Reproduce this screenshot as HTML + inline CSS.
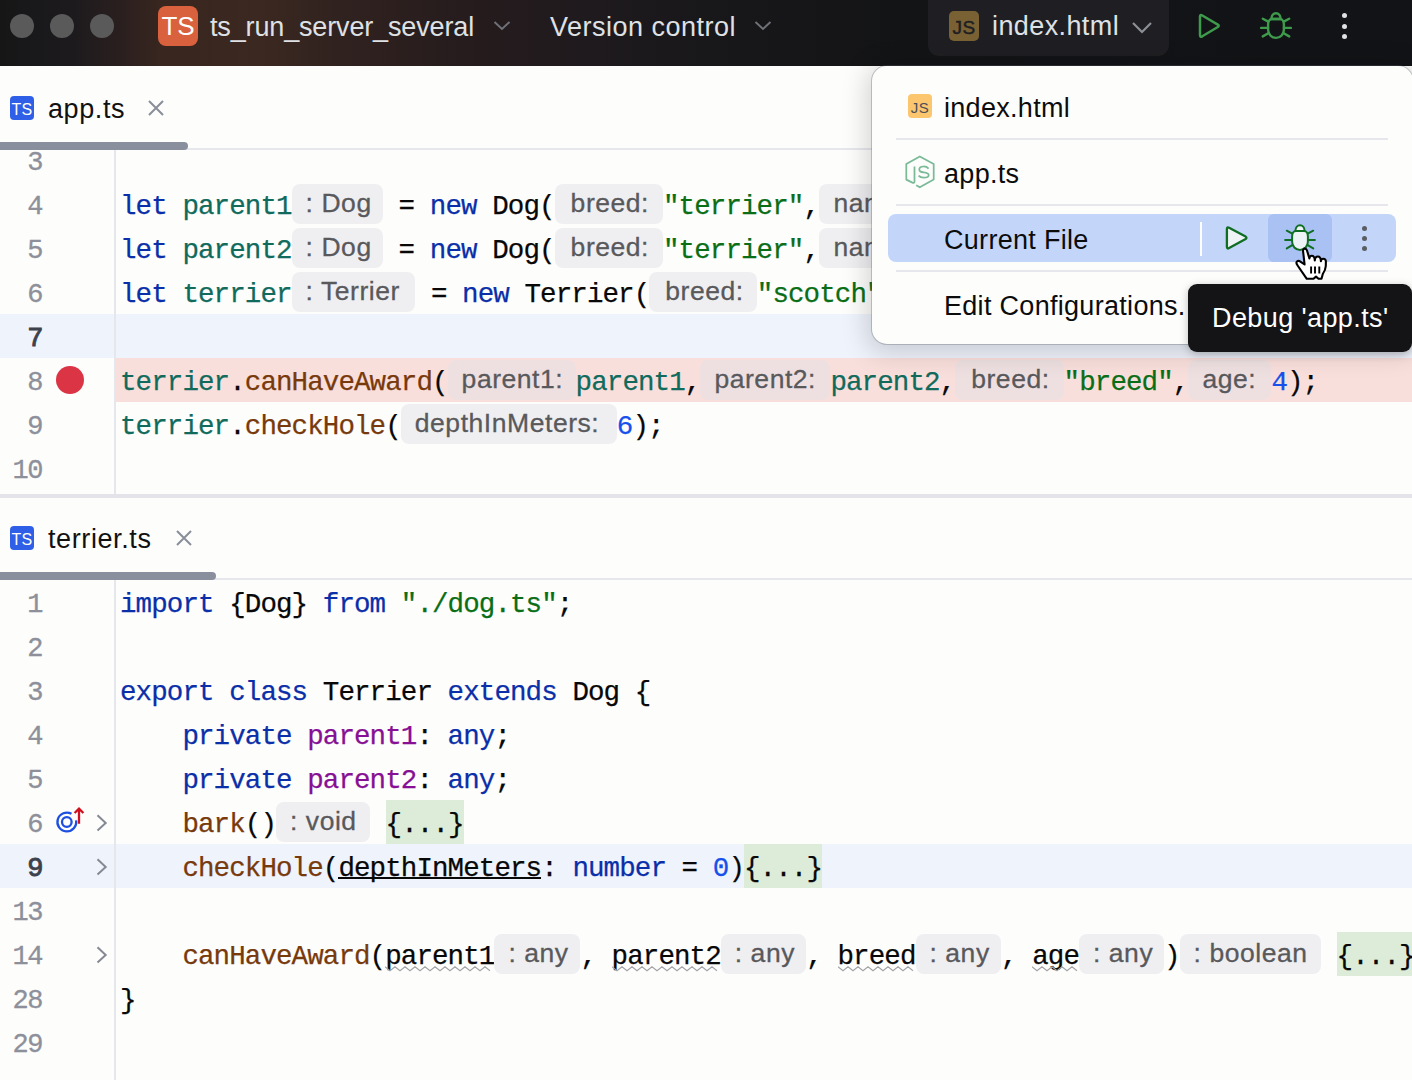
<!DOCTYPE html>
<html><head><meta charset="utf-8">
<style>
*{margin:0;padding:0;box-sizing:border-box}
html,body{width:1412px;height:1080px;overflow:hidden;background:#fdfdfc}
body{position:relative;font-family:"Liberation Sans",sans-serif}
.abs{position:absolute}
.cd{position:absolute;height:44px;line-height:44px;margin-top:3px;font-family:"Liberation Mono",monospace;font-size:27.5px;letter-spacing:-0.903px;white-space:pre;-webkit-text-stroke:0.25px currentColor}
.ul{text-decoration:underline;text-decoration-thickness:2px;text-underline-offset:5px}
.wv{text-decoration:underline wavy #a8a8ac;text-decoration-thickness:1.5px;text-underline-offset:6px}
.hb{position:absolute;height:39.5px;line-height:39px;border-radius:8px;background:#efeff2;color:#59595c;font-size:26.5px;letter-spacing:0.55px;-webkit-text-stroke:0.3px #59595c;white-space:pre;overflow:hidden}
.fold{position:absolute;height:44px;background:#dcecd8}
.ln{position:absolute;left:0;width:42px;text-align:right;height:44px;line-height:44px;margin-top:3px;font-family:"Liberation Mono",monospace;font-size:27px;letter-spacing:-1.5px;color:#8d909a;-webkit-text-stroke:0.3px currentColor}
.ln.cur{color:#3d414b;-webkit-text-stroke:0.9px currentColor}
.sep{position:absolute;background:#e6e7ed}
.tabtxt{position:absolute;font-size:27px;letter-spacing:0.6px;color:#111;line-height:34px;white-space:pre;margin-top:1px}
.popi{position:absolute;font-size:27px;letter-spacing:0.3px;color:#0c0c0c;white-space:pre;line-height:34px;margin-top:2px}
</style></head><body>

<!-- title bar -->
<div class="abs" style="left:0;top:0;width:1412px;height:66px;background:linear-gradient(90deg,#161617 0px,#1c1a1d 70px,#2a1f1f 120px,#38261f 160px,#3b2820 260px,#30221f 340px,#251b1d 480px,#1e1a1e 600px,#18171a 706px,#131416 900px,#121316 1412px)"></div>
<div class="abs" style="left:10px;top:14px;width:24px;height:24px;border-radius:50%;background:#5a5a5a"></div>
<div class="abs" style="left:50px;top:14px;width:24px;height:24px;border-radius:50%;background:#5a5a5a"></div>
<div class="abs" style="left:90px;top:14px;width:24px;height:24px;border-radius:50%;background:#5a5a5a"></div>
<div class="abs" style="left:158px;top:6px;width:40px;height:40px;border-radius:8px;background:#d9613d;color:#fff;font-size:26px;line-height:40px;text-align:center">TS</div>
<div class="abs" style="left:210px;top:10px;font-size:27px;letter-spacing:-0.15px;line-height:34px;color:#dfe1e5;white-space:pre">ts_run_server_several</div>
<svg class="abs" style="left:493px;top:19px" width="18" height="14" viewBox="0 0 18 14"><path d="M1.5 3 L9 10 L16.5 3" fill="none" stroke="#6f7278" stroke-width="1.9"/></svg>
<div class="abs" style="left:550px;top:10px;font-size:27px;letter-spacing:0.5px;line-height:34px;color:#dfe1e5;white-space:pre">Version control</div>
<svg class="abs" style="left:754px;top:19px" width="18" height="14" viewBox="0 0 18 14"><path d="M1.5 3 L9 10 L16.5 3" fill="none" stroke="#6f7278" stroke-width="1.9"/></svg>
<div class="abs" style="left:928px;top:-12px;width:241px;height:68px;border-radius:11px;background:#1f1f23"></div>
<div class="abs" style="left:949px;top:11px;width:30px;height:30px;border-radius:5px;background:#7a6133;color:#1e1f22;font-size:19px;line-height:33px;text-align:center;letter-spacing:0.5px;-webkit-text-stroke:0.5px #1e1f22">JS</div>
<div class="abs" style="left:992px;top:9px;font-size:27px;letter-spacing:0.4px;line-height:34px;color:#dfe1e5;white-space:pre">index.html</div>
<svg class="abs" style="left:1131px;top:20px" width="22" height="15" viewBox="0 0 22 15"><path d="M2 3 L11 12 L20 3" fill="none" stroke="#8c8f96" stroke-width="2.2"/></svg>
<svg class="abs" style="left:1194px;top:11px" width="30" height="30" viewBox="0 0 30 30"><path d="M6 5.8 Q6 3.2 8.3 4.5 L23.8 13.6 Q25.6 14.8 23.8 16 L8.3 25.3 Q6 26.6 6 24 Z" fill="none" stroke="#3f9b4c" stroke-width="2.5" stroke-linejoin="round"/></svg>
<svg class="abs" style="left:1260px;top:10px" width="32" height="32" viewBox="0 0 32 32"><g fill="none" stroke="#3f9b4c" stroke-width="2.4" stroke-linecap="round" stroke-linejoin="round"><path d="M11.4 9 C11.4 5.5 13.4 3.2 16 3.2 C18.6 3.2 20.6 5.5 20.6 9 Z" fill="none"/><path d="M12 9 H20 C22.4 9 23.9 11.4 23.9 14.4 V19.5 C23.9 24.2 20.5 27.9 16 27.9 C11.5 27.9 8.1 24.2 8.1 19.5 V14.4 C8.1 11.4 9.6 9 12 9 Z" fill="none"/><path d="M1.1 17.9 H8.1 M23.9 17.9 H30.9 M2.8 8.7 L8.3 11.6 M29.2 8.7 L23.7 11.6 M2.8 26.4 L8.3 23.2 M29.2 26.4 L23.7 23.2"/></g></svg>
<div class="abs" style="left:1341.5px;top:12.7px;width:5px;height:5px;border-radius:50%;background:#dfe1e5"></div>
<div class="abs" style="left:1341.5px;top:23.5px;width:5px;height:5px;border-radius:50%;background:#dfe1e5"></div>
<div class="abs" style="left:1341.5px;top:34.2px;width:5px;height:5px;border-radius:50%;background:#dfe1e5"></div>

<!-- editor 1 -->
<div class="abs" style="left:0;top:314px;width:1412px;height:44px;background:#eff3fc"></div>
<div class="abs" style="left:116px;top:358px;width:1296px;height:44px;background:#f9dfdc"></div>
<div class="ln" style="top:138px">3</div><div class="ln" style="top:182px">4</div><div class="ln" style="top:226px">5</div><div class="ln" style="top:270px">6</div><div class="ln cur" style="top:314px">7</div><div class="ln" style="top:358px">8</div><div class="ln" style="top:402px">9</div><div class="ln" style="top:446px">10</div>
<div class="abs" style="left:56px;top:366px;width:28px;height:28px;border-radius:50%;background:#db3545"></div>
<div class="cd" style="left:120.00px;top:182px;color:#0a2fa8">let&nbsp;</div>
<div class="cd" style="left:182.40px;top:182px;color:#106b5d">parent1</div>
<div class="hb" style="left:291.60px;top:184px;width:91.4px"><span style="padding-left:14px">: Dog</span></div>
<div class="cd" style="left:383.00px;top:182px;color:#080808">&nbsp;=&nbsp;</div>
<div class="cd" style="left:429.80px;top:182px;color:#0a2fa8">new</div>
<div class="cd" style="left:476.60px;top:182px;color:#080808">&nbsp;Dog(</div>
<div class="hb" style="left:554.60px;top:184px;width:108.4px"><span style="padding-left:16px">breed:</span></div>
<div class="cd" style="left:663.00px;top:182px;color:#0a6e17">"terrier"</div>
<div class="cd" style="left:803.40px;top:182px;color:#080808">,</div>
<div class="hb" style="left:819.00px;top:184px;width:120px"><span style="padding-left:14.5px">name:</span></div><div class="cd" style="left:120.00px;top:226px;color:#0a2fa8">let&nbsp;</div>
<div class="cd" style="left:182.40px;top:226px;color:#106b5d">parent2</div>
<div class="hb" style="left:291.60px;top:228px;width:91.4px"><span style="padding-left:14px">: Dog</span></div>
<div class="cd" style="left:383.00px;top:226px;color:#080808">&nbsp;=&nbsp;</div>
<div class="cd" style="left:429.80px;top:226px;color:#0a2fa8">new</div>
<div class="cd" style="left:476.60px;top:226px;color:#080808">&nbsp;Dog(</div>
<div class="hb" style="left:554.60px;top:228px;width:108.4px"><span style="padding-left:16px">breed:</span></div>
<div class="cd" style="left:663.00px;top:226px;color:#0a6e17">"terrier"</div>
<div class="cd" style="left:803.40px;top:226px;color:#080808">,</div>
<div class="hb" style="left:819.00px;top:228px;width:120px"><span style="padding-left:14.5px">name:</span></div><div class="cd" style="left:120.00px;top:270px;color:#0a2fa8">let&nbsp;</div>
<div class="cd" style="left:182.40px;top:270px;color:#106b5d">terrier</div>
<div class="hb" style="left:291.60px;top:272px;width:123.7px"><span style="padding-left:14px">: Terrier</span></div>
<div class="cd" style="left:415.30px;top:270px;color:#080808">&nbsp;=&nbsp;</div>
<div class="cd" style="left:462.10px;top:270px;color:#0a2fa8">new</div>
<div class="cd" style="left:508.90px;top:270px;color:#080808">&nbsp;Terrier(</div>
<div class="hb" style="left:649.30px;top:272px;width:107.5px"><span style="padding-left:16px">breed:</span></div>
<div class="cd" style="left:756.80px;top:270px;color:#0a6e17">"scotch"</div>
<div class="cd" style="left:881.60px;top:270px;color:#080808">,&nbsp;</div><div class="cd" style="left:120.00px;top:358px;color:#106b5d">terrier</div>
<div class="cd" style="left:229.20px;top:358px;color:#080808">.</div>
<div class="cd" style="left:244.80px;top:358px;color:#783a0c">canHaveAward</div>
<div class="cd" style="left:432.00px;top:358px;color:#080808">(</div>
<div class="hb" style="left:447.60px;top:360px;width:128px;background:#eee0e1"><span style="padding-left:14px">parent1:</span></div>
<div class="cd" style="left:575.60px;top:358px;color:#106b5d">parent1</div>
<div class="cd" style="left:684.80px;top:358px;color:#080808">,</div>
<div class="hb" style="left:700.40px;top:360px;width:130px;background:#eee0e1"><span style="padding-left:14px">parent2:</span></div>
<div class="cd" style="left:830.40px;top:358px;color:#106b5d">parent2</div>
<div class="cd" style="left:939.60px;top:358px;color:#080808">,</div>
<div class="hb" style="left:955.20px;top:360px;width:108.4px;background:#eee0e1"><span style="padding-left:16px">breed:</span></div>
<div class="cd" style="left:1063.60px;top:358px;color:#0a6e17">"breed"</div>
<div class="cd" style="left:1172.80px;top:358px;color:#080808">,</div>
<div class="hb" style="left:1188.40px;top:360px;width:83px;background:#eee0e1"><span style="padding-left:14px">age:</span></div>
<div class="cd" style="left:1271.40px;top:358px;color:#1750eb">4</div>
<div class="cd" style="left:1287.00px;top:358px;color:#080808">);</div><div class="cd" style="left:120.00px;top:402px;color:#106b5d">terrier</div>
<div class="cd" style="left:229.20px;top:402px;color:#080808">.</div>
<div class="cd" style="left:244.80px;top:402px;color:#783a0c">checkHole</div>
<div class="cd" style="left:385.20px;top:402px;color:#080808">(</div>
<div class="hb" style="left:400.80px;top:404px;width:216px"><span style="padding-left:14px">depthInMeters:</span></div>
<div class="cd" style="left:616.80px;top:402px;color:#1750eb">6</div>
<div class="cd" style="left:632.40px;top:402px;color:#080808">);</div>
<div class="sep" style="left:114px;top:149px;width:2px;height:345px"></div>

<!-- tab header 1 -->
<div class="abs" style="left:0;top:66px;width:1412px;height:83px;background:#fdfdfc"></div>
<div class="abs" style="left:10px;top:96px;width:24px;height:24px;border-radius:4px;background:#2f5fe6;color:#fff;font-size:16px;line-height:27px;text-align:center;letter-spacing:0.3px">TS</div>
<div class="tabtxt" style="left:48px;top:91px">app.ts</div>
<svg class="abs" style="left:148px;top:100px" width="16" height="16" viewBox="0 0 16 16"><path d="M1 1 L15 15 M15 1 L1 15" stroke="#8a8e99" stroke-width="2"/></svg>
<div class="sep" style="left:0;top:148px;width:1412px;height:2px"></div>
<div class="abs" style="left:-8px;top:142px;width:196px;height:8px;border-radius:4px;background:#8a8f9e"></div>

<!-- split divider -->
<div class="abs" style="left:0;top:494px;width:1412px;height:4px;background:#e3e3e9"></div>

<!-- tab header 2 -->
<div class="abs" style="left:10px;top:526px;width:24px;height:24px;border-radius:4px;background:#2f5fe6;color:#fff;font-size:16px;line-height:27px;text-align:center;letter-spacing:0.3px">TS</div>
<div class="tabtxt" style="left:48px;top:521px">terrier.ts</div>
<svg class="abs" style="left:176px;top:530px" width="16" height="16" viewBox="0 0 16 16"><path d="M1 1 L15 15 M15 1 L1 15" stroke="#8a8e99" stroke-width="2"/></svg>
<div class="sep" style="left:0;top:578px;width:1412px;height:2px"></div>
<div class="abs" style="left:-8px;top:572px;width:224px;height:8px;border-radius:4px;background:#8a8f9e"></div>

<!-- editor 2 -->
<div class="abs" style="left:0;top:844px;width:1412px;height:44px;background:#eff3fc"></div>
<div class="ln" style="top:580px">1</div><div class="ln" style="top:624px">2</div><div class="ln" style="top:668px">3</div><div class="ln" style="top:712px">4</div><div class="ln" style="top:756px">5</div><div class="ln" style="top:800px">6</div><div class="ln cur" style="top:844px">9</div><div class="ln" style="top:888px">13</div><div class="ln" style="top:932px">14</div><div class="ln" style="top:976px">28</div><div class="ln" style="top:1020px">29</div>
<div class="cd" style="left:120.00px;top:580px;color:#0a2fa8">import</div>
<div class="cd" style="left:213.60px;top:580px;color:#080808">&nbsp;{Dog}&nbsp;</div>
<div class="cd" style="left:322.80px;top:580px;color:#0a2fa8">from</div>
<div class="cd" style="left:385.20px;top:580px;color:#080808">&nbsp;</div>
<div class="cd" style="left:400.80px;top:580px;color:#0a6e17">"./dog.ts"</div>
<div class="cd" style="left:556.80px;top:580px;color:#080808">;</div><div class="cd" style="left:120.00px;top:668px;color:#0a2fa8">export&nbsp;class</div>
<div class="cd" style="left:307.20px;top:668px;color:#080808">&nbsp;Terrier&nbsp;</div>
<div class="cd" style="left:447.60px;top:668px;color:#0a2fa8">extends</div>
<div class="cd" style="left:556.80px;top:668px;color:#080808">&nbsp;Dog&nbsp;{</div><div class="cd" style="left:120.00px;top:712px;color:#080808">&nbsp;&nbsp;&nbsp;&nbsp;</div>
<div class="cd" style="left:182.40px;top:712px;color:#0a2fa8">private&nbsp;</div>
<div class="cd" style="left:307.20px;top:712px;color:#871094">parent1</div>
<div class="cd" style="left:416.40px;top:712px;color:#080808">:&nbsp;</div>
<div class="cd" style="left:447.60px;top:712px;color:#0a2fa8">any</div>
<div class="cd" style="left:494.40px;top:712px;color:#080808">;</div><div class="cd" style="left:120.00px;top:756px;color:#080808">&nbsp;&nbsp;&nbsp;&nbsp;</div>
<div class="cd" style="left:182.40px;top:756px;color:#0a2fa8">private&nbsp;</div>
<div class="cd" style="left:307.20px;top:756px;color:#871094">parent2</div>
<div class="cd" style="left:416.40px;top:756px;color:#080808">:&nbsp;</div>
<div class="cd" style="left:447.60px;top:756px;color:#0a2fa8">any</div>
<div class="cd" style="left:494.40px;top:756px;color:#080808">;</div><div class="cd" style="left:120.00px;top:800px;color:#080808">&nbsp;&nbsp;&nbsp;&nbsp;</div>
<div class="cd" style="left:182.40px;top:800px;color:#783a0c">bark</div>
<div class="cd" style="left:244.80px;top:800px;color:#080808">()</div>
<div class="hb" style="left:276.00px;top:802px;width:94px"><span style="padding-left:14px">: void</span></div>
<div class="cd" style="left:370.00px;top:800px;color:#080808">&nbsp;</div>
<div class="fold" style="left:385.60px;top:800px;width:78.00px"></div>
<div class="cd" style="left:385.60px;top:800px;color:#080808">{...}</div><div class="cd" style="left:120.00px;top:844px;color:#080808">&nbsp;&nbsp;&nbsp;&nbsp;</div>
<div class="cd" style="left:182.40px;top:844px;color:#783a0c">checkHole</div>
<div class="cd" style="left:322.80px;top:844px;color:#080808">(</div>
<div class="cd" style="left:338.40px;top:844px;color:#080808">depthInMeters</div>
<div class="abs" style="left:338.40px;top:877px;width:202.80px;height:2px;background:#080808"></div>
<div class="cd" style="left:541.20px;top:844px;color:#080808">:&nbsp;</div>
<div class="cd" style="left:572.40px;top:844px;color:#0a2fa8">number</div>
<div class="cd" style="left:666.00px;top:844px;color:#080808">&nbsp;=&nbsp;</div>
<div class="cd" style="left:712.80px;top:844px;color:#1750eb">0</div>
<div class="cd" style="left:728.40px;top:844px;color:#080808">)</div>
<div class="fold" style="left:744.00px;top:844px;width:78.00px"></div>
<div class="cd" style="left:744.00px;top:844px;color:#080808">{...}</div><div class="cd" style="left:120.00px;top:932px;color:#080808">&nbsp;&nbsp;&nbsp;&nbsp;</div>
<div class="cd" style="left:182.40px;top:932px;color:#783a0c">canHaveAward</div>
<div class="cd" style="left:369.60px;top:932px;color:#080808">(</div>
<div class="cd" style="left:385.20px;top:932px;color:#080808">parent1</div>
<svg class="abs" style="left:385.20px;top:966px" width="109.2" height="6" viewBox="0 0 109.2 6"><polyline points="0.0,0.8 5.0,4.8 10.0,0.8 15.0,4.8 20.0,0.8 25.0,4.8 30.0,0.8 35.0,4.8 40.0,0.8 45.0,4.8 50.0,0.8 55.0,4.8 60.0,0.8 65.0,4.8 70.0,0.8 75.0,4.8 80.0,0.8 85.0,4.8 90.0,0.8 95.0,4.8 100.0,0.8 105.0,4.8" fill="none" stroke="#a3a3a7" stroke-width="1.1"/></svg>
<div class="hb" style="left:494.40px;top:934px;width:86px"><span style="padding-left:14px">: any</span></div>
<div class="cd" style="left:580.40px;top:932px;color:#080808">,&nbsp;</div>
<div class="cd" style="left:611.60px;top:932px;color:#080808">parent2</div>
<svg class="abs" style="left:611.60px;top:966px" width="109.2" height="6" viewBox="0 0 109.2 6"><polyline points="0.0,0.8 5.0,4.8 10.0,0.8 15.0,4.8 20.0,0.8 25.0,4.8 30.0,0.8 35.0,4.8 40.0,0.8 45.0,4.8 50.0,0.8 55.0,4.8 60.0,0.8 65.0,4.8 70.0,0.8 75.0,4.8 80.0,0.8 85.0,4.8 90.0,0.8 95.0,4.8 100.0,0.8 105.0,4.8" fill="none" stroke="#a3a3a7" stroke-width="1.1"/></svg>
<div class="hb" style="left:720.80px;top:934px;width:85.5px"><span style="padding-left:14px">: any</span></div>
<div class="cd" style="left:806.30px;top:932px;color:#080808">,&nbsp;</div>
<div class="cd" style="left:837.50px;top:932px;color:#080808">breed</div>
<svg class="abs" style="left:837.50px;top:966px" width="78.0" height="6" viewBox="0 0 78.0 6"><polyline points="0.0,0.8 5.0,4.8 10.0,0.8 15.0,4.8 20.0,0.8 25.0,4.8 30.0,0.8 35.0,4.8 40.0,0.8 45.0,4.8 50.0,0.8 55.0,4.8 60.0,0.8 65.0,4.8 70.0,0.8 75.0,4.8" fill="none" stroke="#a3a3a7" stroke-width="1.1"/></svg>
<div class="hb" style="left:915.50px;top:934px;width:85.5px"><span style="padding-left:14px">: any</span></div>
<div class="cd" style="left:1001.00px;top:932px;color:#080808">,&nbsp;</div>
<div class="cd" style="left:1032.20px;top:932px;color:#080808">age</div>
<svg class="abs" style="left:1032.20px;top:966px" width="46.8" height="6" viewBox="0 0 46.8 6"><polyline points="0.0,0.8 5.0,4.8 10.0,0.8 15.0,4.8 20.0,0.8 25.0,4.8 30.0,0.8 35.0,4.8 40.0,0.8 45.0,4.8" fill="none" stroke="#a3a3a7" stroke-width="1.1"/></svg>
<div class="hb" style="left:1079.00px;top:934px;width:85px"><span style="padding-left:14px">: any</span></div>
<div class="cd" style="left:1164.00px;top:932px;color:#080808">)</div>
<div class="hb" style="left:1179.60px;top:934px;width:141.4px"><span style="padding-left:14px">: boolean</span></div>
<div class="cd" style="left:1321.00px;top:932px;color:#080808">&nbsp;</div>
<div class="fold" style="left:1336.60px;top:932px;width:78.00px"></div>
<div class="cd" style="left:1336.60px;top:932px;color:#080808">{...}</div><div class="cd" style="left:120.00px;top:976px;color:#080808">}</div>
<div class="sep" style="left:114px;top:580px;width:2px;height:500px"></div>
<svg class="abs" style="left:95px;top:812px" width="14" height="22" viewBox="0 0 14 22"><path d="M2.5 3.3 L10.7 11 L2.5 18.6" fill="none" stroke="#858994" stroke-width="2"/></svg><svg class="abs" style="left:95px;top:856px" width="14" height="22" viewBox="0 0 14 22"><path d="M2.5 3.3 L10.7 11 L2.5 18.6" fill="none" stroke="#858994" stroke-width="2"/></svg><svg class="abs" style="left:95px;top:944px" width="14" height="22" viewBox="0 0 14 22"><path d="M2.5 3.3 L10.7 11 L2.5 18.6" fill="none" stroke="#858994" stroke-width="2"/></svg>
<svg class="abs" style="left:54px;top:806px" width="32" height="30" viewBox="0 0 32 30"><path d="M17.5 7.86 A9.4 9.4 0 1 0 22.06 14.37" fill="none" stroke="#1d4fe0" stroke-width="2.3"/><circle cx="12.8" cy="16" r="4.8" fill="none" stroke="#1d4fe0" stroke-width="2.3"/><path d="M25 17.8 V3 M20.6 7 L25 2.6 L29.4 7" fill="none" stroke="#d0101f" stroke-width="2.3"/></svg>

<!-- popup -->
<div class="abs" style="left:872px;top:66px;width:541px;height:278px;border-radius:15px;background:#fdfdfc;box-shadow:0 0 0 1px rgba(90,95,110,0.32),0 4px 26px 5px rgba(0,0,0,0.17)"></div>
<div class="abs" style="left:908px;top:94px;width:24px;height:24px;border-radius:4px;background:#fcc66f;color:#4a4f5a;font-size:15px;line-height:28px;text-align:center;letter-spacing:0.5px">JS</div>
<div class="popi" style="left:944px;top:89px">index.html</div>
<div class="sep" style="left:896px;top:138px;width:492px;height:2px"></div>
<svg class="abs" style="left:904px;top:154px" width="32" height="36" viewBox="0 0 32 36"><g fill="none" stroke="#7aba96" stroke-width="1.75" stroke-linejoin="round"><path d="M10.5 12.5 V27.5 Q10.5 29.6 8.4 28.6 L2.3 25.6 V10 L15.8 2.4 L29.7 10 V25.6 L15.8 33.3 L12.2 31.2"/><path d="M24.6 14.6 Q22.6 12.4 19.4 12.5 Q15.2 12.7 15.3 15.6 Q15.4 17.9 19.6 18.3 Q24.8 18.8 24.7 21.2 Q24.5 23.6 19.7 23.6 Q16.3 23.6 14.6 21.6"/></g></svg>
<div class="popi" style="left:944px;top:155px">app.ts</div>
<div class="sep" style="left:896px;top:204px;width:492px;height:2px"></div>
<div class="abs" style="left:888px;top:214px;width:508px;height:48px;border-radius:8px;background:#c3d6fa"></div>
<div class="abs" style="left:1268px;top:214px;width:64px;height:48px;border-radius:6px;background:#a9c1f3"></div>
<div class="abs" style="left:1200px;top:222px;width:2px;height:34px;background:#fdfdfc"></div>
<div class="popi" style="left:944px;top:221px">Current File</div>
<svg class="abs" style="left:1222px;top:222px" width="30" height="32" viewBox="0 0 30 32"><path d="M4.9 7 Q4.9 4.5 7.1 5.7 L23.6 14.6 Q25.3 15.8 23.6 17 L7.1 26.1 Q4.9 27.3 4.9 24.8 Z" fill="#eef4f6" stroke="#0f6e22" stroke-width="2.3" stroke-linejoin="round"/></svg>
<svg class="abs" style="left:1284px;top:222px" width="32" height="32" viewBox="0 0 32 32"><g fill="none" stroke="#0f6e22" stroke-width="2.0" stroke-linecap="round" stroke-linejoin="round"><path d="M11.4 9 C11.4 5.5 13.4 3.2 16 3.2 C18.6 3.2 20.6 5.5 20.6 9 Z" fill="#eef4f6"/><path d="M12 9 H20 C22.4 9 23.9 11.4 23.9 14.4 V19.5 C23.9 24.2 20.5 27.9 16 27.9 C11.5 27.9 8.1 24.2 8.1 19.5 V14.4 C8.1 11.4 9.6 9 12 9 Z" fill="#eef4f6"/><path d="M1.1 17.9 H8.1 M23.9 17.9 H30.9 M2.8 8.7 L8.3 11.6 M29.2 8.7 L23.7 11.6 M2.8 26.4 L8.3 23.2 M29.2 26.4 L23.7 23.2"/></g></svg>
<div class="abs" style="left:1362px;top:226px;width:5px;height:5px;border-radius:50%;background:#5a5d63"></div>
<div class="abs" style="left:1362px;top:236px;width:5px;height:5px;border-radius:50%;background:#5a5d63"></div>
<div class="abs" style="left:1362px;top:246px;width:5px;height:5px;border-radius:50%;background:#5a5d63"></div>
<div class="sep" style="left:896px;top:270px;width:492px;height:2px"></div>
<div class="popi" style="left:944px;top:287px">Edit Configurations.</div>

<!-- cursor -->
<svg class="abs" style="left:1290px;top:244px" width="44" height="40" viewBox="0 0 44 40"><path d="M14.8 4.6 C13.4 4.6 12.8 5.8 13.1 7.5 L14.6 20.5 L10 17.3 C8.5 16.4 6.6 17 6.4 18.6 C6.3 19.6 6.8 20.4 7.6 21.5 L16.8 34.8 H23.5 L26 32.6 L28.5 34.8 H31.5 L32.8 30 C34.5 27.5 35.6 25 35.8 22 L35.9 17.6 C35.9 15.8 34.7 14.8 33.5 14.8 C32.2 14.8 31 15.6 30.9 17.2 C30.8 13.8 29.6 12.5 27.8 12.5 C26.2 12.5 25 13.6 24.8 16.5 C24.6 13 23.4 11.8 21.8 11.8 C20.2 11.8 19.5 12.8 19.4 14.5 L17 6.5 C16.6 5.2 15.8 4.6 14.8 4.6 Z" fill="#fff" stroke="#000" stroke-width="2.1" stroke-linejoin="round"/><path d="M21.1 22.6 V29.6 M25 22.6 V29.6 M29.3 22.6 V29.6" stroke="#000" stroke-width="1.9"/></svg>

<!-- tooltip -->
<div class="abs" style="left:1188px;top:284px;width:224px;height:68px;border-radius:9px;background:#141417;box-shadow:0 2px 8px rgba(0,0,0,0.25)"></div>
<div class="abs" style="left:1212px;top:301px;font-size:27px;letter-spacing:0.4px;line-height:34px;color:#fff;white-space:pre">Debug 'app.ts'</div>

</body></html>
